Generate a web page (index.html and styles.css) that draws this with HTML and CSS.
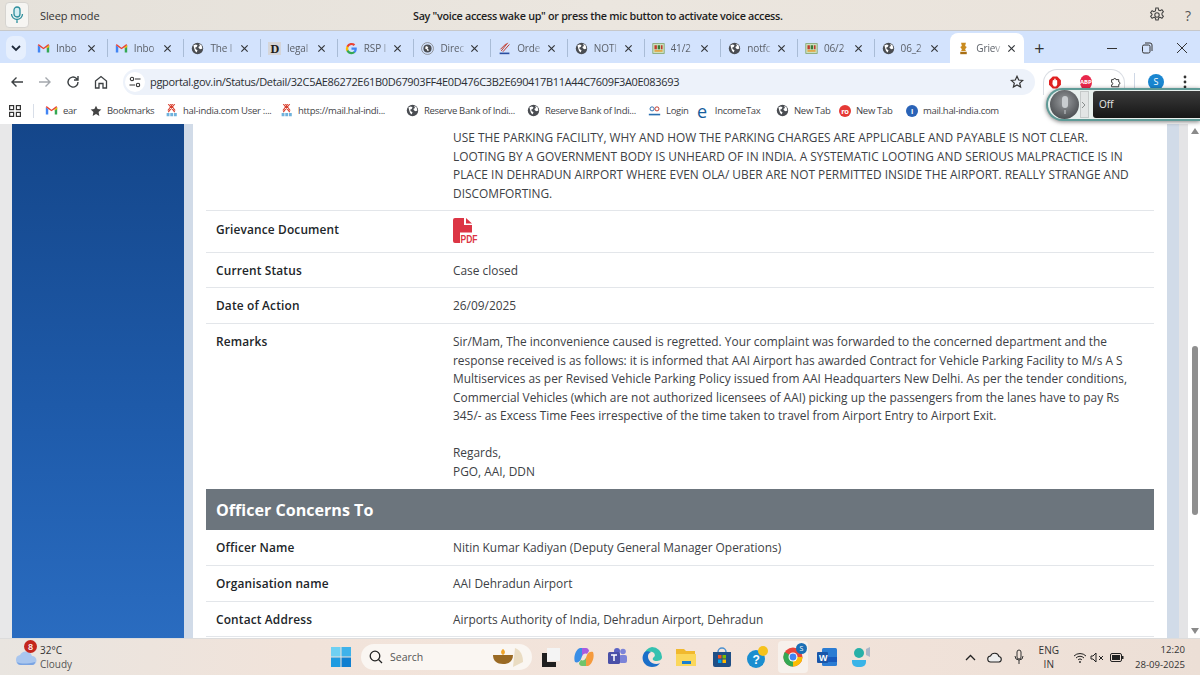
FILE: index.html
```html
<!DOCTYPE html>
<html lang="en">
<head>
	<meta charset="UTF-8">
	<title>Grievance Status</title>
	<link rel="stylesheet" href="styles.css">
</head>
<body>
	<svg class="defs" width="0" height="0">
		<symbol id="globe" viewBox="0 0 16 16">
			<circle cx="8" cy="8" r="7" fill="#4a4d52"/>
			<path d="M3 4l3-1 2 1-1 2-2 1 1 2 2 1-1 3-2-2-1-3zM10 2l3 2 1 4-2 1-2-1-1-2 2-1z" fill="#fff"/>
		</symbol>
		<symbol id="gmail" viewBox="0 0 16 16">
			<path d="M1 13V4l3 2v7z" fill="#4285f4"/>
			<path d="M15 13V4l-3 2v7z" fill="#34a853"/>
			<path d="M1 4l1-1.500L8 7l6-4.500L15 4l-3 2-4 3-4-3z" fill="#ea4335"/>
			<path d="M12 6l3-2v2l-3 2z" fill="#fbbc04"/>
		</symbol>
		<symbol id="sci" viewBox="0 0 16 16">
			<rect x="1" y="2" width="14" height="12" fill="#cfe3c0" stroke="#7da36a"/>
			<rect x="3" y="4" width="3" height="5" fill="#c0392b"/>
			<rect x="7" y="4" width="3" height="5" fill="#3d7a35"/>
			<rect x="11" y="4" width="2" height="5" fill="#c0392b"/>
			<rect x="3" y="10" width="10" height="2" fill="#e3a13a"/>
		</symbol>
		<symbol id="gcn" viewBox="0 0 16 16">
			<path d="M4 0l8 10M12 0L4 10M6.500 0l6 8M9.500 0l-6 8" stroke="#d8402f" stroke-width="1.300"/>
			<path d="M2 11h3.500v4H2zM6.500 11H10v4H6.500zM11 11h3.500v4H11z" fill="#6fb2dc"/>
		</symbol>
		<symbol id="x" viewBox="0 0 10 10">
			<path d="M1.500 1.500l7 7M8.500 1.500l-7 7" stroke="#33363a" stroke-width="1.300" fill="none"/>
		</symbol>
	</svg>

	<header class="voice">
		<div class="voice-btn">
			<svg width="14" height="18" viewBox="0 0 14 18" fill="none" stroke="#2f8f9d" stroke-width="1.300"><rect x="4" y="1" width="6" height="10" rx="3" fill="#d5eef2"/><path d="M1.500 8a5.500 5.500 0 0 0 11 0M7 13.500V17"/></svg>
		</div>
		<span class="voice-state">Sleep mode</span>
		<span class="voice-hint">Say "voice access wake up" or press the mic button to activate voice access.</span>
		<div class="voice-tools">
			<svg width="16" height="16" viewBox="0 0 16 16" fill="none" stroke="#444" stroke-width="1.100"><path d="M6.800 1h2.400l.4 2 1.500.7 1.800-1 1.500 2-1.400 1.500v1.600l1.400 1.500-1.500 2-1.800-1-1.500.7-.4 2H6.800l-.4-2-1.500-.7-1.800 1-1.500-2 1.400-1.500V7.200L1.600 5.700l1.500-2 1.800 1 1.500-.7z"/><circle cx="8" cy="8" r="2.200"/></svg>
			<span class="voice-help">?</span>
		</div>
	</header>

	<nav class="tabstrip">
		<div class="tab-search"><svg width="10" height="7" viewBox="0 0 10 7" fill="none" stroke="#1f2a3a" stroke-width="1.800"><path d="M1 1l4 4 4-4"/></svg></div>
		<div class="tabs">
			<div class="tab"><svg class="favicon"><use href="#gmail"/></svg><span class="tab-title">Inbo</span><svg class="tab-x"><use href="#x"/></svg></div>
			<div class="tab"><svg class="favicon"><use href="#gmail"/></svg><span class="tab-title">Inbo</span><svg class="tab-x"><use href="#x"/></svg></div>
			<div class="tab"><svg class="favicon"><use href="#globe"/></svg><span class="tab-title">The l</span><svg class="tab-x"><use href="#x"/></svg></div>
			<div class="tab"><svg class="favicon" viewBox="0 0 16 16"><rect width="16" height="16" fill="#d5d5d8"/><text x="3" y="14" class="fav-d">D</text></svg><span class="tab-title">legal</span><svg class="tab-x"><use href="#x"/></svg></div>
			<div class="tab"><svg class="favicon" viewBox="0 0 16 16"><path d="M14.500 8.200c0-.5 0-1-.1-1.400H8v2.700h3.700a3.200 3.200 0 0 1-1.400 2.100v1.700h2.200c1.300-1.200 2-3 2-5.100z" fill="#4285f4"/><path d="M8 15c1.900 0 3.400-.6 4.500-1.700l-2.200-1.700c-.6.400-1.400.7-2.300.7-1.800 0-3.300-1.200-3.800-2.800H1.900v1.800A7 7 0 0 0 8 15z" fill="#34a853"/><path d="M4.200 9.500a4.200 4.200 0 0 1 0-2.900V4.800H1.900a7 7 0 0 0 0 6.500z" fill="#fbbc04"/><path d="M8 3.800c1 0 1.900.4 2.600 1l2-2A7 7 0 0 0 1.900 4.800l2.300 1.800C4.700 5 6.200 3.800 8 3.800z" fill="#ea4335"/></svg><span class="tab-title">RSP I</span><svg class="tab-x"><use href="#x"/></svg></div>
			<div class="tab"><svg class="favicon" viewBox="0 0 16 16"><circle cx="8" cy="8" r="7.300" fill="none" stroke="#777" stroke-width=".9"/><circle cx="8" cy="8" r="5" fill="#4a4d52"/><path d="M6 5l3 1-1 2 2 2-2 1-1-2-2-1z" fill="#fff"/></svg><span class="tab-title">Direc</span><svg class="tab-x"><use href="#x"/></svg></div>
			<div class="tab"><svg class="favicon" viewBox="0 0 16 16"><path d="M4 11L12 1M6 12l8-9M3 9l7-7" stroke="#c0392b" stroke-width="1.200"/><path d="M2 13h12v2H2z" fill="#2a4ea0"/></svg><span class="tab-title">Orde</span><svg class="tab-x"><use href="#x"/></svg></div>
			<div class="tab"><svg class="favicon"><use href="#globe"/></svg><span class="tab-title">NOTI</span><svg class="tab-x"><use href="#x"/></svg></div>
			<div class="tab"><svg class="favicon"><use href="#sci"/></svg><span class="tab-title">41/2</span><svg class="tab-x"><use href="#x"/></svg></div>
			<div class="tab"><svg class="favicon"><use href="#globe"/></svg><span class="tab-title">notfc</span><svg class="tab-x"><use href="#x"/></svg></div>
			<div class="tab"><svg class="favicon"><use href="#sci"/></svg><span class="tab-title">06/2</span><svg class="tab-x"><use href="#x"/></svg></div>
			<div class="tab"><svg class="favicon"><use href="#globe"/></svg><span class="tab-title">06_2</span><svg class="tab-x"><use href="#x"/></svg></div>
			<div class="tab active"><svg class="favicon" viewBox="0 0 16 16"><path d="M5 1h6l-1 4 2 1-2 3 1 2H5l1-2-2-3 2-1z" fill="#c98a1e"/><path d="M4 12h8v3H4z" fill="#a86f14"/></svg><span class="tab-title">Griev</span><svg class="tab-x"><use href="#x"/></svg></div>
		</div>
		<span class="tab-new">+</span>
		<div class="win-btns">
			<svg width="12" height="12" viewBox="0 0 12 12" stroke="#333" fill="none"><path d="M1 6.500h10"/></svg>
			<svg width="12" height="12" viewBox="0 0 12 12" stroke="#333" fill="none"><rect x="1.500" y="3" width="7.500" height="8" rx="1.500"/><path d="M4 1h5a2 2 0 0 1 2 2v6"/></svg>
			<svg width="12" height="12" viewBox="0 0 12 12" stroke="#333" fill="none"><path d="M1 1l10 10M11 1L1 11"/></svg>
		</div>
	</nav>

	<div class="toolbar">
		<svg class="tool" viewBox="0 0 16 16" fill="none" stroke="#3c4043" stroke-width="1.400"><path d="M14 8H3M7.500 3.500L3 8l4.500 4.500"/></svg>
		<svg class="tool" viewBox="0 0 16 16" fill="none" stroke="#a4a8ad" stroke-width="1.400"><path d="M2 8h11M8.500 3.500L13 8l-4.500 4.500"/></svg>
		<svg class="tool" viewBox="0 0 16 16" fill="none" stroke="#3c4043" stroke-width="1.400"><path d="M13 8a5 5 0 1 1-1.500-3.500L13 6M13 2v4H9"/></svg>
		<svg class="tool" viewBox="0 0 16 16" fill="none" stroke="#3c4043" stroke-width="1.300"><path d="M2.500 7L8 2.500 13.500 7v7H10V9.500H6V14H2.500z"/></svg>
		<div class="omnibox">
			<div class="tune"><svg width="12" height="12" viewBox="0 0 12 12" fill="none" stroke="#333" stroke-width="1.100"><circle cx="3" cy="3" r="1.700"/><path d="M6 3h5.500M.5 9H6"/><circle cx="9" cy="9" r="1.700"/></svg></div>
			<span class="url">pgportal.gov.in/Status/Detail/32C5AE86272E61B0D67903FF4E0D476C3B2E690417B11A44C7609F3A0E083693</span>
			<svg class="url-star" width="14" height="14" viewBox="0 0 14 14" fill="none" stroke="#333" stroke-width="1.200"><path d="M7 1.300l1.700 3.700 4 .4-3 2.700.9 4L7 10l-3.600 2.100.9-4-3-2.700 4-.4z"/></svg>
		</div>
		<div class="ext-pill">
			<svg width="15" height="15" viewBox="0 0 16 16"><path d="M5 0h6l5 5v6l-5 5H5l-5-5V5z" fill="#e02020"/><path d="M5 5.500a1 1 0 0 1 2 0V3.500a1 1 0 0 1 2 0v2a1 1 0 0 1 2 0V11l-1.500 2.500h-3L4.500 10z" fill="#fff"/></svg>
			<span class="abp">ABP</span>
			<svg class="ext-puzzle" width="14" height="14" viewBox="0 0 14 14" fill="none" stroke="#333" stroke-width="1.200"><path d="M2 4h2.500a1.500 1.500 0 0 1 3 0H11v3a1.500 1.500 0 0 1 0 3v3H2v-2.500a1.500 1.500 0 0 0 0-3z"/></svg>
		</div>
		<span class="tool-sep"></span>
		<span class="avatar">S</span>
		<svg class="tool-menu" width="4" height="14" viewBox="0 0 4 14" fill="#333"><circle cx="2" cy="2" r="1.400"/><circle cx="2" cy="7" r="1.400"/><circle cx="2" cy="12" r="1.400"/></svg>
	</div>

	<div class="bookmarks">
		<svg class="bm-apps" width="12" height="12" viewBox="0 0 12 12" fill="none" stroke="#333" stroke-width="1.200"><rect x=".6" y=".6" width="4" height="4"/><rect x="7.400" y=".6" width="4" height="4"/><rect x=".6" y="7.400" width="4" height="4"/><rect x="7.400" y="7.400" width="4" height="4"/></svg>
		<span class="bm-sep"></span>
		<a class="bm bm-ear"><svg class="favicon"><use href="#gmail"/></svg>ear</a>
		<a class="bm bm-mark"><svg width="12" height="12" viewBox="0 0 14 14" fill="#444"><path d="M7 .8l1.900 4 4.300.5-3.200 3 .9 4.400L7 10.500l-3.900 2.200.9-4.400-3.200-3 4.300-.5z"/></svg>Bookmarks</a>
		<a class="bm bm-hal"><svg class="favicon"><use href="#gcn"/></svg>hal-india.com User :...</a>
		<a class="bm bm-mail"><svg class="favicon"><use href="#gcn"/></svg>https://mail.hal-indi...</a>
		<a class="bm bm-rbi"><svg class="favicon"><use href="#globe"/></svg>Reserve Bank of Indi...</a>
		<a class="bm bm-rbi"><svg class="favicon"><use href="#globe"/></svg>Reserve Bank of Indi...</a>
		<a class="bm bm-login"><svg class="favicon" viewBox="0 0 16 16"><circle cx="5" cy="6" r="2.500" fill="none" stroke="#2a6fb0" stroke-width="1.200"/><circle cx="11" cy="6" r="2.500" fill="none" stroke="#c0392b" stroke-width="1.200"/><path d="M1 12h14v2H1z" fill="#2a6fb0"/></svg>Login</a>
		<a class="bm bm-tax"><span class="ie-e">e</span>IncomeTax</a>
		<a class="bm bm-tab1"><svg class="favicon"><use href="#globe"/></svg>New Tab</a>
		<a class="bm bm-tab2"><span class="ro-dot">ro</span>New Tab</a>
		<a class="bm"><span class="info-dot">i</span>mail.hal-india.com</a>
	</div>

	<main class="viewport">
		<aside class="side-gap"></aside>
		<aside class="side-blue"></aside>
		<aside class="side-edge"></aside>
		<section class="page">
			<div class="row row-first">
				<div class="row-label"></div>
				<div class="row-value">USE THE PARKING FACILITY, WHY AND HOW THE PARKING CHARGES ARE APPLICABLE AND PAYABLE IS NOT CLEAR. LOOTING BY A GOVERNMENT BODY IS UNHEARD OF IN INDIA. A SYSTEMATIC LOOTING AND SERIOUS MALPRACTICE IS IN PLACE IN DEHRADUN AIRPORT WHERE EVEN OLA/ UBER ARE NOT PERMITTED INSIDE THE AIRPORT. REALLY STRANGE AND DISCOMFORTING.</div>
			</div>
			<div class="row row-doc">
				<div class="row-label">Grievance Document</div>
				<div class="row-value">
					<svg class="pdf" width="26" height="27" viewBox="0 0 26 27"><path d="M2 0h9v7h8v7.500H7V25H2a2 2 0 0 1-2-2V2a2 2 0 0 1 2-2z" fill="#dc3545"/><path d="M13 0l6 5.500h-6z" fill="#dc3545"/><text x="7.500" y="25" class="pdf-text" textLength="17" lengthAdjust="spacingAndGlyphs">PDF</text></svg>
				</div>
			</div>
			<div class="row">
				<div class="row-label">Current Status</div>
				<div class="row-value">Case closed</div>
			</div>
			<div class="row">
				<div class="row-label">Date of Action</div>
				<div class="row-value">26/09/2025</div>
			</div>
			<div class="row row-plain">
				<div class="row-label">Remarks</div>
				<div class="row-value">Sir/Mam, The inconvenience caused is regretted. Your complaint was forwarded to the concerned department and the response received is as follows: it is informed that AAI Airport has awarded Contract for Vehicle Parking Facility to M/s A S Multiservices as per Revised Vehicle Parking Policy issued from AAI Headquarters New Delhi. As per the tender conditions, Commercial Vehicles (which are not authorized licensees of AAI) picking up the passengers from the lanes have to pay Rs 345/- as Excess Time Fees irrespective of the time taken to travel from Airport Entry to Airport Exit.<br><br>Regards,<br>PGO, AAI, DDN</div>
			</div>
			<h2 class="section-head">Officer Concerns To</h2>
			<div class="row">
				<div class="row-label">Officer Name</div>
				<div class="row-value">Nitin Kumar Kadiyan (Deputy General Manager Operations)</div>
			</div>
			<div class="row">
				<div class="row-label">Organisation name</div>
				<div class="row-value">AAI Dehradun Airport</div>
			</div>
			<div class="row">
				<div class="row-label">Contact Address</div>
				<div class="row-value">Airports Authority of India, Dehradun Airport, Dehradun</div>
			</div>
		</section>
		<aside class="side-edge side-edge-right"></aside>
		<aside class="side-gap side-gap-right"></aside>
		<div class="scrollbar">
			<span class="arrow-up"></span>
			<span class="thumb"></span>
			<span class="arrow-down"></span>
		</div>
	</main>

	<footer class="taskbar">
		<div class="weather">
			<svg class="weather-icon" width="22" height="18" viewBox="0 0 22 18"><path d="M6 17a5 5 0 0 1-1-9.900A6.500 6.500 0 0 1 17 8a4.500 4.500 0 0 1 0 9z" fill="#a9c6ee"/><path d="M2 14c4 2 10 2 18 0v1a3 3 0 0 1-3 2H6a4 4 0 0 1-4-3z" fill="#7aa4e2"/></svg>
			<span class="badge">8</span>
			<div class="weather-text">32°C<br><span>Cloudy</span></div>
		</div>
		<div class="task-center">
			<svg class="task-win" width="20" height="20" viewBox="0 0 20 20"><rect width="9.500" height="9.500" fill="#6fd0f2"/><rect x="10.500" width="9.500" height="9.500" fill="#3fb2ea"/><rect y="10.500" width="9.500" height="9.500" fill="#1f9be0"/><rect x="10.500" y="10.500" width="9.500" height="9.500" fill="#0f7fd0"/></svg>
			<div class="task-search">
				<svg width="14" height="14" viewBox="0 0 14 14" fill="none" stroke="#222" stroke-width="1.300"><circle cx="6" cy="6" r="4.800"/><path d="M9.500 9.500L13 13"/></svg>
				<span>Search</span>
				<svg class="diya" width="38" height="22" viewBox="0 0 38 22"><path d="M24 2c6 2 8 8 8 14l-10 5z" fill="#eadcc2"/><path d="M2 9h20c0 6-4 9-10 9S2 15 2 9z" fill="#9a6a24"/><path d="M12 3c3 2 2 5 0 6-2-1-3-4 0-6z" fill="#f0a52a"/></svg>
			</div>
			<svg class="task-icon" width="18" height="19" viewBox="0 0 18 19"><rect x="5" width="13" height="13" fill="#f4f4f4"/><path d="M0 5h5v9h9v5H0z" fill="#1f1f1f"/></svg>
			<svg class="task-icon" width="20" height="20" viewBox="0 0 20 20"><path d="M6 1h5L7 12c-1 3-4 4-6 3C-1 10 2 2 6 1z" fill="#3a8ee6"/><path d="M14 19H9l4-11c1-3 4-4 6-3 2 5-1 13-5 14z" fill="#f59a3c"/><path d="M8 1h4c2 0 3 2 3 3l-2 3c-2-1-4 0-5 2z" fill="#a85be0"/><path d="M12 19H8c-2 0-3-2-3-3l2-3c2 1 4 0 5-2z" fill="#6fc46a"/></svg>
			<svg class="task-icon" width="20" height="20" viewBox="0 0 20 20"><circle cx="15" cy="4.500" r="2.800" fill="#7b83d8"/><rect x="11" y="8" width="8" height="8" rx="2" fill="#7b83d8"/><circle cx="9" cy="4" r="3" fill="#5b62c4"/><rect y="5" width="12" height="12" rx="1.500" fill="#4a50a8"/><path d="M3 8h6M6 8v6" stroke="#fff" stroke-width="1.500"/></svg>
			<svg class="task-icon" width="20" height="20" viewBox="0 0 20 20"><path d="M10 0a10 10 0 0 1 10 10c0 3-3 4-6 4-2 0-4-1-3-3 1-1 3-2 1-5-2-2-7-2-10 2A10 10 0 0 1 10 0z" fill="#35c1b0"/><path d="M2 6c-4 7 1 14 8 14 3 0 6-1 8-4-3 2-9 1-11-3C5 10 6 6 9 5 6 4 3 4 2 6z" fill="#1a6fc9"/></svg>
			<svg class="task-icon task-files" width="20" height="18" viewBox="0 0 20 18"><path d="M0 1h8l2 2h9v3H0z" fill="#f1b92e"/><path d="M0 6h20v12H0z" fill="#fbd75b"/><rect x="6" y="13" width="9" height="3" fill="#1a7fd0"/></svg>
			<svg class="task-icon task-store" width="18" height="20" viewBox="0 0 18 20"><path d="M0 5h18v13a2 2 0 0 1-2 2H2a2 2 0 0 1-2-2z" fill="#1f4f86"/><path d="M5 5a4 4 0 0 1 8 0" fill="none" stroke="#4a90d0" stroke-width="1.500"/><rect x="5" y="8" width="3.500" height="3.500" fill="#f25022"/><rect x="9.500" y="8" width="3.500" height="3.500" fill="#7fba00"/><rect x="5" y="12.500" width="3.500" height="3.500" fill="#00a4ef"/><rect x="9.500" y="12.500" width="3.500" height="3.500" fill="#ffb900"/></svg>
			<svg class="task-icon" width="22" height="22" viewBox="0 0 22 22"><circle cx="9" cy="13" r="9" fill="#1b8ed0"/><circle cx="16" cy="5" r="5" fill="#f6c21c"/><text x="5.500" y="18" class="help-q">?</text></svg>
			<div class="task-chrome">
				<svg width="20" height="20" viewBox="0 0 20 20"><circle cx="10" cy="10" r="9.500" fill="#e8453c"/><path d="M10 10L1.800 5A9.500 9.500 0 0 0 10 19.500z" fill="#34a853"/><path d="M10 10h9.500A9.500 9.500 0 0 1 10 19.500z" fill="#fbbc04"/><circle cx="10" cy="10" r="4.500" fill="#fff"/><circle cx="10" cy="10" r="3.400" fill="#4285f4"/></svg>
				<span class="chrome-badge">S</span>
			</div>
			<svg class="task-icon" width="20" height="20" viewBox="0 0 20 20"><rect x="5" y="1" width="15" height="18" rx="1.500" fill="#2b7cd3"/><rect x="5" y="10" width="15" height="5" fill="#185abd"/><rect y="5" width="11" height="11" rx="1" fill="#1a56a8"/><text x="2" y="14" class="word-w">W</text></svg>
			<svg class="task-icon" width="20" height="22" viewBox="0 0 20 22"><circle cx="8" cy="7" r="5" fill="#27b0a8"/><path d="M1 14h14v2a5 5 0 0 1-5 5H6a5 5 0 0 1-5-5z" fill="#3ab4e8"/><path d="M15 3l4-2v10l-4-2z" fill="#a9b6c8"/></svg>
		</div>
		<div class="tray">
			<svg class="tray-chev" width="11" height="7" viewBox="0 0 11 7" fill="none" stroke="#222" stroke-width="1.300"><path d="M1 6l4.500-4.500L10 6"/></svg>
			<svg width="16" height="11" viewBox="0 0 16 11" fill="#eee" stroke="#222" stroke-width="1.100"><path d="M4 10a3 3 0 0 1-.5-6A4.500 4.500 0 0 1 12 4.500 2.800 2.800 0 0 1 12 10z"/></svg>
			<svg width="10" height="16" viewBox="0 0 10 16" fill="none" stroke="#333" stroke-width="1"><rect x="3" y="1" width="4" height="9" rx="2"/><path d="M1 7a4 4 0 0 0 8 0M5 11v4"/></svg>
			<div class="tray-lang">ENG<br>IN</div>
			<svg class="tray-wifi" width="14" height="11" viewBox="0 0 14 11" fill="none" stroke="#222" stroke-width="1"><path d="M1 4a8.500 8.500 0 0 1 12 0M3 6a5.500 5.500 0 0 1 8 0M5 8a2.500 2.500 0 0 1 4 0"/><circle cx="7" cy="10" r=".6"/></svg>
			<svg class="tray-sound" width="14" height="11" viewBox="0 0 14 11" fill="none" stroke="#222"><path d="M1 4v3h2l3 3V1L3 4zM9 4l4 4M13 4L9 8"/></svg>
			<svg class="tray-batt" width="14" height="9" viewBox="0 0 14 9"><rect x=".5" y=".5" width="11" height="8" rx="1.500" fill="none" stroke="#222"/><rect x="2" y="2" width="8" height="5" fill="#222"/><rect x="12" y="3" width="1.500" height="3" fill="#222"/></svg>
			<div class="tray-clock">12:20<br>28-09-2025</div>
		</div>
	</footer>

	<div class="mic-float">
		<div class="mic-ball">
			<svg width="12" height="20" viewBox="0 0 12 20"><rect x="3" y="1" width="6" height="12" rx="3" fill="#c9cdd0"/><path d="M6 15v4" stroke="#c9cdd0"/></svg>
		</div>
		<div class="mic-tab"><svg width="5" height="8" viewBox="0 0 5 8" fill="none" stroke="#8a8f8f"><path d="M1 1l3 3-3 3"/></svg></div>
		<div class="mic-panel">Off</div>
	</div>
</body>
</html>
```

FILE: styles.css
```css
* {
	box-sizing: border-box;
}
html, body {
	height: 100%;
}
body {
	color: #3c4043;
	display: flex;
	flex-direction: column;
	font-family: "Open Sans", "Noto Sans", sans-serif;
	height: 675px;
	margin: 0;
	overflow: hidden;
	position: relative;
	width: 1200px;
}
.defs {
	position: absolute;
}
.favicon {
	flex: none;
	height: 13px;
	width: 13px;
}

/* voice access bar */
.voice {
	align-items: center;
	background: linear-gradient(90deg, #e5e1da, #ebe6df 50%, #eae3db);
	border-bottom: 1px solid #c7c8c9;
	display: flex;
	flex: none;
	height: 31px;
	padding: 0 9px 0 5px;
}
.voice-btn {
	align-items: center;
	background: #f6f5f2;
	border: 1px solid #d6d4d0;
	border-radius: 4px;
	display: flex;
	height: 26px;
	justify-content: center;
	width: 24px;
}
.voice-state {
	color: #333;
	font-size: 11px;
	letter-spacing: -.1px;
	margin-left: 11px;
	width: 373px;
}
.voice-hint {
	color: #1d1d1d;
	font-size: 10.8px;
	font-weight: 600;
	letter-spacing: -.3px;
	width: 373px;
	white-space: nowrap;
}
.voice-tools {
	align-items: center;
	display: flex;
	gap: 20px;
	margin-left: auto;
}
.voice-help {
	color: #555;
	font-size: 14px;
}

/* tabs */
.tabstrip {
	align-items: center;
	background: #d3e3fd;
	display: flex;
	flex: none;
	height: 32px;
	padding: 2px 0 0 6px;
}
.tab-search {
	align-items: center;
	background: #e6effd;
	border-radius: 7px;
	display: flex;
	height: 24px;
	justify-content: center;
	width: 20px;
}
.tabs {
	align-items: center;
	display: flex;
	height: 30px;
	margin-left: 4px;
}
.tab {
	align-items: center;
	border-left: 1px solid #a9bcd6;
	display: flex;
	height: 18px;
	padding: 0 11px 0 7px;
	width: 76.7px;
}
.tab:first-child {
	border-left: none;
}
.tab.active {
	background: #fff;
	border-left: none;
	border-radius: 8px 8px 0 0;
	height: 30px;
	padding-right: 8px;
	width: 74px;
}
.tab-title {
	color: #5b6068;
	flex: 1;
	font-size: 10px;
	letter-spacing: -.1px;
	margin: 0 5px 0 6px;
	-webkit-mask-image: linear-gradient(90deg, #000 70%, rgba(0,0,0,.15));
	mask-image: linear-gradient(90deg, #000 70%, rgba(0,0,0,.15));
	white-space: nowrap;
}
.tab-x {
	flex: none;
	height: 9px;
	width: 9px;
}
.fav-d {
	fill: #1b1b1b;
	font-family: "Liberation Serif", serif;
	font-size: 15px;
	font-weight: 700;
}
.tab-new {
	color: #333;
	font-size: 18px;
	margin-left: 10px;
}
.win-btns {
	align-items: center;
	display: flex;
	gap: 23px;
	margin-left: auto;
	padding-right: 12px;
}

/* toolbar */
.toolbar {
	align-items: center;
	background: #fff;
	display: flex;
	flex: none;
	height: 34px;
	padding: 3px 0 0 9px;
}
.tool {
	flex: none;
	height: 16px;
	margin-right: 12px;
	width: 16px;
}
.omnibox {
	align-items: center;
	background: #edf2fa;
	border-radius: 14px;
	display: flex;
	height: 26px;
	margin-left: 2px;
	padding: 0 11px 0 2px;
	width: 912px;
}
.tune {
	align-items: center;
	background: #fff;
	border-radius: 50%;
	display: flex;
	height: 20px;
	justify-content: center;
	width: 20px;
}
.url {
	color: #2b2e33;
	font-size: 11px;
	letter-spacing: -.33px;
	margin-left: 5px;
}
.url-star {
	margin-left: auto;
}
.ext-pill {
	align-items: center;
	border: 1px solid #d9dde3;
	border-bottom: none;
	border-radius: 14px 14px 0 0;
	display: flex;
	gap: 19px;
	height: 26px;
	margin-left: 8px;
	padding: 0 3px 0 5px;
	width: 82px;
}
.ext-pill .ext-puzzle {
	margin-left: -1px;
}
.abp {
	background: #e8274b;
	border-radius: 50%;
	color: #fff;
	font-size: 6px;
	font-weight: 700;
	line-height: 15px;
	text-align: center;
	width: 15px;
}
.tool-sep {
	background: #cfd8e6;
	height: 18px;
	margin-left: 9px;
	width: 1px;
}
.avatar {
	background: #1a86d0;
	border-radius: 50%;
	color: #fff;
	font-size: 9px;
	height: 16px;
	line-height: 16px;
	margin-left: 13px;
	text-align: center;
	width: 16px;
}
.tool-menu {
	margin-left: 19px;
}

/* bookmarks */
.bookmarks {
	align-items: center;
	background: #fff;
	display: flex;
	flex: none;
	height: 27px;
	padding-left: 9px;
}
.bm-sep {
	background: #d8dee8;
	height: 14px;
	margin: 0 11px 0 12px;
	width: 1px;
}
.bm {
	align-items: center;
	color: #3f4347;
	display: flex;
	font-size: 9.5px;
	gap: 5px;
	letter-spacing: -.3px;
	white-space: nowrap;
}
.bm-ear { width: 45px; }
.bm-mark { width: 75px; }
.bm-hal { width: 115px; }
.bm-mail { width: 126px; }
.bm-rbi { width: 121px; }
.bm-login { width: 49px; }
.bm-tax { width: 79px; }
.bm-tab1 { width: 63px; }
.bm-tab2 { width: 67px; }
.ie-e {
	color: #155d9c;
	font-size: 18px;
	line-height: 14px;
	margin-right: 3px;
}
.ro-dot, .info-dot {
	background: #e53935;
	border-radius: 50%;
	color: #fff;
	font-size: 7.5px;
	font-weight: 700;
	height: 12px;
	line-height: 12px;
	text-align: center;
	width: 12px;
}
.info-dot {
	background: #2a63b7;
}

/* page */
.viewport {
	display: flex;
	flex: 1;
	min-height: 0;
	overflow: hidden;
}
.side-gap {
	background: #e8e8e9;
	flex: none;
	width: 12px;
}
.side-gap-right {
	background: #e4e4e6;
	width: 9px;
}
.side-blue {
	background: linear-gradient(180deg, #14468a, #1f5cac 60%, #2a6cc0);
	flex: none;
	width: 172px;
}
.side-edge {
	background: #d1dbe8;
	flex: none;
	width: 9px;
}
.side-edge-right {
	width: 12px;
}
.page {
	background: #fff;
	flex: none;
	padding: 4px 13px 0 13px;
	width: 974px;
}
.row {
	border-bottom: 1px solid #e3e6ea;
	display: grid;
	font-size: 11.9px;
	grid-template-columns: 237px 1fr;
	line-height: 18.57px;
	padding: 8px 14px 8px 10px;
}
.row-first {
	padding-top: 0;
}
.row-doc {
	padding-top: 7px;
	padding-bottom: 6.6px;
}
.row-plain {
	border-bottom: none;
	padding-bottom: 9px;
}
.row-label {
	color: #212529;
	font-weight: 600;
	letter-spacing: .15px;
}
.row-doc .row-label {
	padding-top: 2px;
}
.row-value {
	color: #3d4145;
}
.pdf {
	display: block;
}
.pdf-text {
	fill: #dc3545;
	font-family: "Liberation Sans", sans-serif;
	font-size: 10px;
	font-weight: 700;
}
.section-head {
	background: #6c757d;
	color: #fff;
	font-size: 16.1px;
	font-weight: 700;
	height: 41px;
	line-height: 43px;
	margin: 0;
	padding-left: 10px;
}

/* scrollbar */
.scrollbar {
	background: #fff;
	display: flex;
	flex: none;
	flex-direction: column;
	align-items: center;
	padding: 4px 0;
	width: 13px;
}
.arrow-up, .arrow-down {
	border-left: 4px solid transparent;
	border-right: 4px solid transparent;
	height: 0;
	width: 0;
}
.arrow-up {
	border-bottom: 6px solid #8a8a8a;
}
.arrow-down {
	border-top: 6px solid #8a8a8a;
	margin-top: auto;
}
.thumb {
	background: #8f8f8f;
	border-radius: 3px;
	height: 169px;
	margin-top: 212px;
	width: 6px;
}

/* taskbar */
.taskbar {
	align-items: center;
	background: linear-gradient(90deg, #e9e5e0, #f1e3da 25%, #f3e4db 60%, #ecdfd6);
	border-top: 1px solid #dcdcdc;
	display: flex;
	flex: none;
	height: 37px;
	position: relative;
}
.weather {
	align-items: center;
	display: flex;
	margin-left: 15px;
	position: relative;
	width: 316px;
}
.badge {
	background: #c4261d;
	border-radius: 50%;
	color: #fff;
	font-size: 9px;
	font-weight: 600;
	height: 13px;
	left: 9px;
	line-height: 13px;
	position: absolute;
	text-align: center;
	top: -3px;
	width: 13px;
}
.weather-text {
	color: #333;
	font-size: 10px;
	line-height: 14px;
	margin-left: 3px;
}
.weather-text span {
	color: #555;
}
.task-center {
	align-items: center;
	display: flex;
	width: 550px;
}
.task-search {
	align-items: center;
	background: #faf6f2;
	border-radius: 13px;
	display: flex;
	gap: 7px;
	height: 26px;
	margin: 0 3px 0 10px;
	padding: 0 3px 0 8px;
	width: 171px;
}
.task-search span {
	color: #555;
	font-size: 10.5px;
}
.diya {
	margin-left: auto;
}
.task-icon {
	flex: none;
	margin: 0 7px;
}
.task-files {
	margin-right: 8px;
}
.task-store {
	margin: 0 9px;
}
.task-chrome {
	align-items: center;
	background: #f7f1ec;
	border-radius: 4px;
	display: flex;
	height: 32px;
	justify-content: center;
	margin: 0 2px;
	position: relative;
	width: 30px;
}
.chrome-badge {
	background: #1a6fb5;
	border-radius: 50%;
	color: #fff;
	font-size: 7px;
	height: 11px;
	line-height: 11px;
	position: absolute;
	right: 1px;
	text-align: center;
	top: 2px;
	width: 11px;
}
.help-q, .word-w {
	fill: #fff;
	font-family: "Liberation Sans", sans-serif;
	font-size: 12px;
	font-weight: 700;
}
.word-w {
	font-size: 9px;
}
.tray {
	align-items: center;
	display: flex;
	gap: 11px;
	margin-left: auto;
	padding-right: 15px;
}
.tray-lang {
	color: #333;
	font-size: 10px;
	line-height: 14px;
	margin: 0 3px 0 4px;
	text-align: center;
}
.tray-wifi {
	margin-right: -2px;
}
.tray-sound {
	margin-left: -6px;
}
.tray-batt {
	margin-left: -5px;
}
.tray-clock {
	color: #333;
	font-size: 9.6px;
	line-height: 15px;
	text-align: right;
}

/* floating mic widget */
.mic-float {
	align-items: center;
	background: #e8f0ee;
	border: 2px solid #5e9a96;
	border-radius: 17px 0 0 17px;
	border-right: none;
	box-shadow: 0 1px 4px rgba(0,0,0,.5);
	display: flex;
	height: 33px;
	left: 1046px;
	padding-left: 2px;
	position: absolute;
	top: 88px;
	width: 154px;
}
.mic-ball {
	align-items: center;
	background: radial-gradient(circle at 50% 40%, #9a9da0, #4e5154 75%, #2f3133);
	border-radius: 50%;
	display: flex;
	flex: none;
	height: 29px;
	justify-content: center;
	width: 29px;
}
.mic-tab {
	align-items: center;
	background: #e2e5e5;
	border: 1px solid #c5c9c9;
	display: flex;
	flex: none;
	height: 27px;
	margin-left: 1px;
	width: 9px;
}
.mic-panel {
	background: linear-gradient(180deg, #3b3b3b, #161616);
	border-radius: 3px 0 0 3px;
	color: #e8e8e8;
	flex: 1;
	font-size: 10px;
	height: 27px;
	line-height: 27px;
	margin-left: 4px;
	padding-left: 6px;
}
```
